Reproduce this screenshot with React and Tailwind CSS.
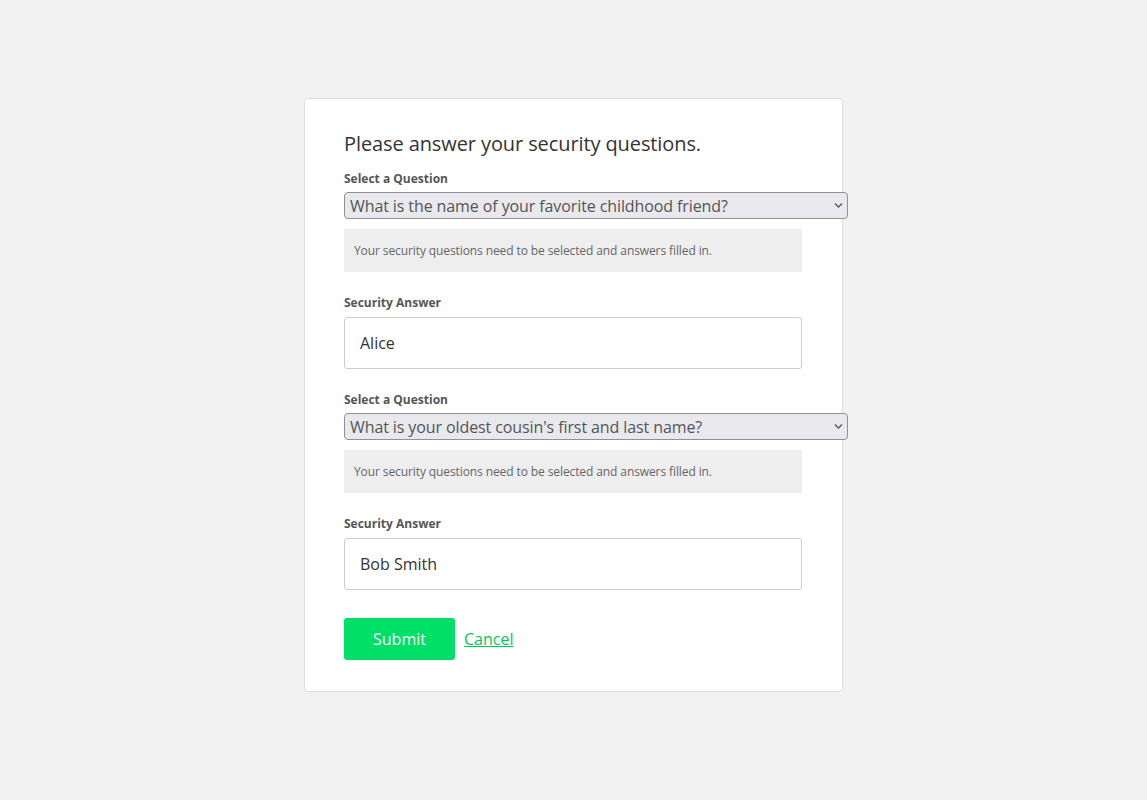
import React, { useState } from "react";

const QUESTIONS = [
  "What is the name of your favorite childhood friend?",
  "What is your oldest cousin's first and last name?",
  "What was the name of your first pet?",
  "In what city were you born?",
];

const QuestionBlock = ({ question, answer, onQuestion, onAnswer }) => {
  return (
    <div>
      <label className="block text-[12px] font-bold text-[#555] leading-[16px] mb-[5px]">
        Select a Question
      </label>
      <div className="relative w-[504px]">
        <select
          value={question}
          onChange={(e) => onQuestion(e.target.value)}
          className="appearance-none block w-full h-[27px] pl-[5px] pr-6 text-[16px] leading-[20px] tracking-[-0.1px] text-[#555] bg-[#e9e9ed] border border-[#8f8f9d] rounded-[4px]"
        >
          {QUESTIONS.map((q) => (
            <option key={q} value={q}>
              {q}
            </option>
          ))}
        </select>
        <svg
          className="absolute right-[5px] top-[10px] w-[9px] h-[7px] text-[#555] pointer-events-none"
          viewBox="0 0 9 7"
          fill="none"
          stroke="currentColor"
          strokeWidth="1.3"
        >
          <path d="M1 1.5 L4.5 5 L8 1.5" />
        </svg>
      </div>
      <div className="mt-[10px] w-[458px] h-[43px] flex items-center px-[10px] bg-[#eeeeee] text-[12px] tracking-[-0.1px] text-[#666]">
        Your security questions need to be selected and answers filled in.
      </div>
      <label className="block mt-[23px] text-[12px] font-bold text-[#555] leading-[16px] mb-[6px]">
        Security Answer
      </label>
      <input
        type="text"
        value={answer}
        onChange={(e) => onAnswer(e.target.value)}
        className="block w-[458px] h-[52px] px-[15px] text-[16px] text-[#333] bg-white border border-[#cccccc] rounded-[3px] outline-none"
      />
    </div>
  );
};

export default function App() {
  const [items, setItems] = useState([
    { question: QUESTIONS[0], answer: "Alice" },
    { question: QUESTIONS[1], answer: "Bob Smith" },
  ]);

  const update = (i, key, value) => {
    setItems((prev) => prev.map((it, idx) => (idx === i ? { ...it, [key]: value } : it)));
  };

  return (
    <div
      className="min-h-screen bg-[#f2f2f2] pt-[98px]"
      style={{ fontFamily: '"Open Sans", "Noto Sans", sans-serif' }}
    >
      <div className="mx-auto w-[539px] bg-white border border-[#dddddd] rounded-[4px] pl-[39px] pt-[30px] pb-[31px]">
        <h1 className="text-[20px] leading-[30px] tracking-[-0.1px] text-[#333] mb-[12px]">
          Please answer your security questions.
        </h1>
        <div className="flex flex-col gap-[23px]">
          {items.map((it, i) => (
            <QuestionBlock
              key={i}
              question={it.question}
              answer={it.answer}
              onQuestion={(v) => update(i, "question", v)}
              onAnswer={(v) => update(i, "answer", v)}
            />
          ))}
        </div>
        <div className="flex items-center mt-[28px]">
          <button className="w-[111px] h-[42px] bg-[#00e068] text-white text-[16px] rounded-[3px]">
            Submit
          </button>
          <a href="#" className="ml-[9px] text-[16px] text-[#00c85c] underline">
            Cancel
          </a>
        </div>
      </div>
    </div>
  );
}
